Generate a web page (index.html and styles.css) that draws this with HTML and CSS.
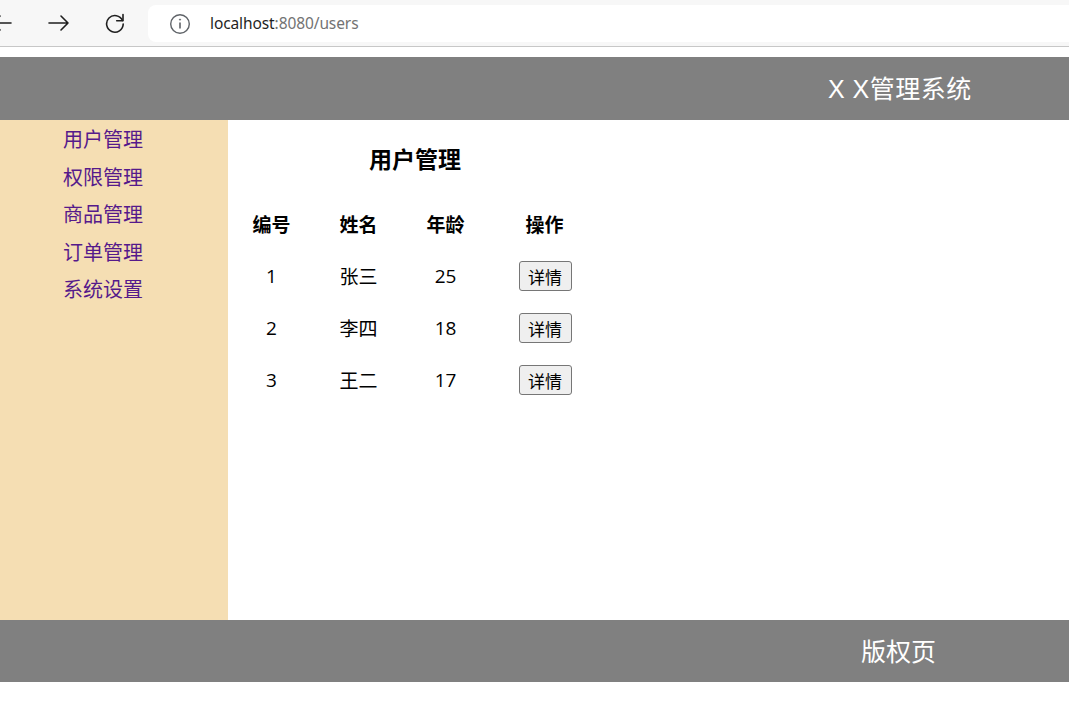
FILE: index.html
```html
<!DOCTYPE html>
<html lang="zh-CN">
<head>
<meta charset="utf-8">
<title>XX管理系统</title>
<link rel="stylesheet" href="styles.css">
</head>
<body>
<div class="toolbar">
  <svg class="nav-icon back" width="22" height="22" viewBox="0 0 22 22" fill="none" stroke="#1f1f1f" stroke-width="1.6" stroke-linecap="round" stroke-linejoin="round"><path d="M20 11H2M9 4L2 11l7 7"/></svg>
  <svg class="nav-icon fwd" width="22" height="22" viewBox="0 0 22 22" fill="none" stroke="#1f1f1f" stroke-width="1.6" stroke-linecap="round" stroke-linejoin="round"><path d="M1 11h19M13 4l7 7-7 7"/></svg>
  <svg class="nav-icon reload" width="22" height="22" viewBox="0 0 22 22" fill="none" stroke="#1f1f1f" stroke-width="1.6" stroke-linecap="round" stroke-linejoin="round"><path d="M18.5 8.5A8.3 8.3 0 1 0 19.2 12"/><path d="M19 2.5v6.3h-6.3"/></svg>
  <div class="omnibox">
    <svg class="info" width="22" height="22" viewBox="0 0 22 22" fill="none" stroke="#5f6368" stroke-width="1.4"><circle cx="11" cy="11" r="9.3"/><path d="M11 9.5v6" stroke-width="1.6"/><circle cx="11" cy="6.6" r="0.6" fill="#5f6368" stroke-width="0.9"/></svg>
    <span class="url"><span class="host">localhost</span><span class="path">:8080/users</span></span>
  </div>
</div>

<div class="app">
  <header class="app-header">X X管理系统</header>
  <div class="app-body">
    <nav class="sidebar">
      <a class="nav-link" href="#">用户管理</a>
      <a class="nav-link" href="#">权限管理</a>
      <a class="nav-link" href="#">商品管理</a>
      <a class="nav-link" href="#">订单管理</a>
      <a class="nav-link" href="#">系统设置</a>
    </nav>
    <main class="content">
      <div class="panel">
        <h3 class="title">用户管理</h3>
        <div class="grid">
          <div class="cell head">编号</div>
          <div class="cell head">姓名</div>
          <div class="cell head">年龄</div>
          <div class="cell head">操作</div>

          <div class="cell">1</div>
          <div class="cell">张三</div>
          <div class="cell">25</div>
          <div class="cell"><button class="btn">详情</button></div>

          <div class="cell">2</div>
          <div class="cell">李四</div>
          <div class="cell">18</div>
          <div class="cell"><button class="btn">详情</button></div>

          <div class="cell">3</div>
          <div class="cell">王二</div>
          <div class="cell">17</div>
          <div class="cell"><button class="btn">详情</button></div>
        </div>
      </div>
    </main>
  </div>
  <footer class="app-footer">版权页</footer>
</div>
</body>
</html>
```

FILE: styles.css
```css
html, body {
  margin: 0;
  padding: 0;
  background: #ffffff;
  font-family: "Noto Sans CJK SC", "Noto Sans", sans-serif;
  overflow: hidden;
}

.toolbar {
  height: 46px;
  background: #f7f7f7;
  border-bottom: 1px solid #c7c7c7;
  display: flex;
  align-items: center;
}

.nav-icon {
  flex: none;
}

.back {
  margin-left: -9px;
}

.fwd {
  margin-left: 35px;
}

.reload {
  margin-left: 34px;
}

.omnibox {
  margin-left: 22px;
  flex: 1;
  height: 37px;
  margin-top: 1px;
  background: #ffffff;
  border-radius: 8px 0 0 8px;
  display: flex;
  align-items: center;
}

.info {
  margin-left: 21px;
  flex: none;
}

.url {
  margin-left: 19px;
  font-family: "Noto Sans", "Open Sans", sans-serif;
  font-size: 15.5px;
  letter-spacing: -0.1px;
  margin-top: -1px;
}

.host {
  color: #1f1f1f;
}

.path {
  color: #737373;
}

.app {
  margin-top: 10px;
}

.app-header {
  height: 63px;
  background: #808080;
  color: #ffffff;
  font-family: "Liberation Sans", "Noto Sans CJK SC", sans-serif;
  font-size: 25px;
  letter-spacing: 0.5px;
  display: flex;
  align-items: center;
  padding-left: 828px;
  padding-bottom: 4px;
  box-sizing: border-box;
}

.app-body {
  display: flex;
  height: 500px;
}

.sidebar {
  width: 228px;
  flex: none;
  background: #f5deb3;
  display: flex;
  flex-direction: column;
  padding-left: 63px;
  box-sizing: border-box;
}

.nav-link {
  color: #551a8b;
  text-decoration: none;
  font-size: 20px;
  line-height: 37.5px;
}

.content {
  flex: 1;
  background: #ffffff;
}

.panel {
  width: 372px;
}

.title {
  margin: 0;
  padding-top: 23px;
  text-align: center;
  font-size: 23px;
  line-height: 30px;
  font-weight: 700;
  color: #000;
  padding-left: 2px;
}

.grid {
  margin-top: 24px;
  display: grid;
  grid-template-columns: 87px 87px 87px 111px;
  grid-auto-rows: 52px;
}

.cell {
  display: flex;
  align-items: center;
  justify-content: center;
  padding-top: 2px;
  font-family: "Open Sans", "Noto Sans CJK SC", sans-serif;
  font-size: 19px;
  color: #000;
}

.head {
  padding-top: 0;
  font-family: "Noto Sans CJK SC", sans-serif;
  font-weight: 700;
  font-size: 19px;
}

.btn {
  width: 53px;
  height: 30px;
  padding: 0;
  font-family: "Noto Sans CJK SC", sans-serif;
  font-size: 17px;
  color: #000;
  background: #efefef;
  border: 1px solid #767676;
  border-radius: 3px;
  margin-left: 1px;
}

.app-footer {
  height: 62px;
  background: #808080;
  color: #ffffff;
  font-size: 25px;
  display: flex;
  align-items: center;
  padding-left: 861px;
  padding-bottom: 2px;
  box-sizing: border-box;
}
```
